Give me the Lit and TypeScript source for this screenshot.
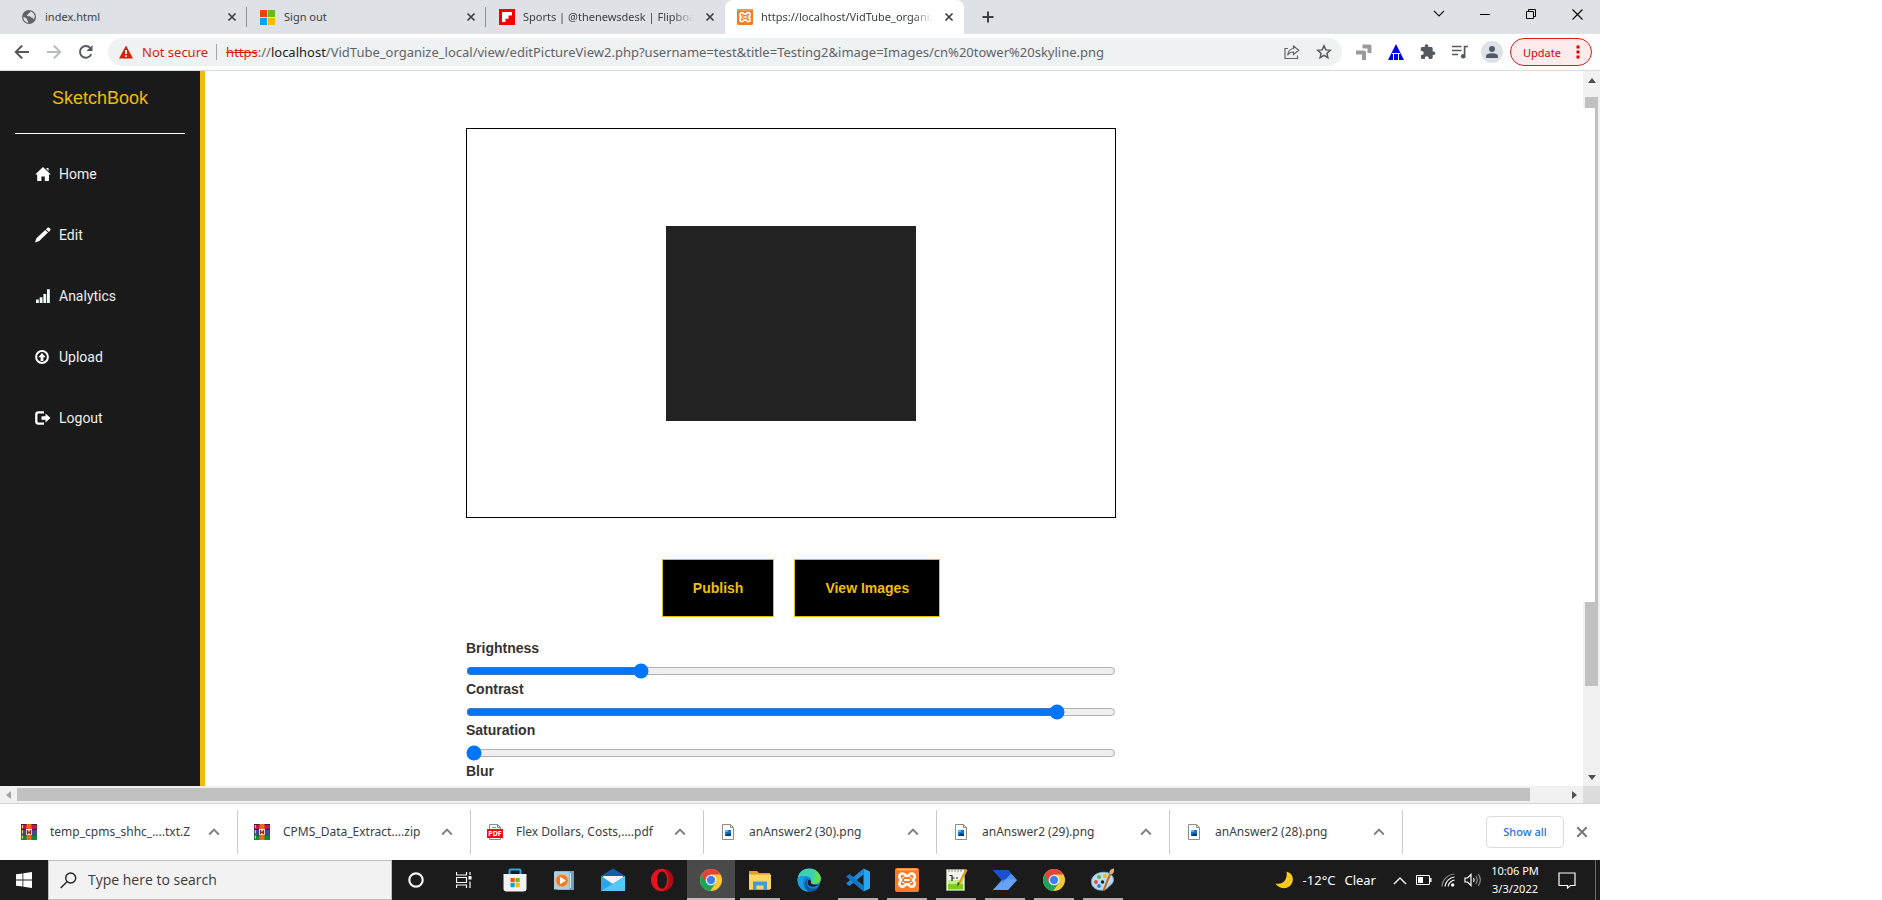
import { LitElement, html, css, svg, TemplateResult } from "lit";
import { customElement, property } from "lit/decorators.js";
import { classMap } from "lit/directives/class-map.js";

const icon = (w: number, h: number, body: TemplateResult, box = `0 0 ${w} ${h}`) =>
  html`<svg width=${w} height=${h} viewBox=${box} fill="none" aria-hidden="true">${body}</svg>`;

/* ---------- browser chrome ---------- */
const closeSmall = icon(10, 10, svg`<path d="M1.5 1.5l7 7M8.5 1.5l-7 7" stroke="#3c4043" stroke-width="1.7"/>`);
const globe = icon(16, 16, svg`<circle cx="8" cy="8" r="7" fill="#5f6368"/>
  <path d="M2.2 8.2c1.6 0 2.6.5 3.4 1.2.7.7.1 1.500.9 2 .8.4.6 1.500.6 2.300-2.600-.4-4.800-2.600-4.900-5.500zM9.200 2.300c.1 1-.2 1.500-1.200 1.900-.9.300-.6 1.400-1.600 1.600-.8.2-.4 1.500.5 1.500 1.400 0 2.400-.2 3 .8.4.8 1.500.6 2.100 1.200.5.500.4 1.100.1 1.700 1-1 1.700-2.300 1.600-3.800-.3-2.500-2-4.400-4.500-4.900z" fill="#dee1e6"/>`);
const microsoft = icon(16, 16, svg`<path d="M0 1h7v7H0z" fill="#ff4000"/><path d="M8 1h7v7H8z" fill="#6cbb1e"/><path d="M0 9h7v7H0z" fill="#00a4ef"/><path d="M8 9h7v7H8z" fill="#ffb900"/>`);
const flipboard = icon(16, 16, svg`<path d="M0 0h16v16H0z" fill="#f50000"/><path d="M3 3h10v3.500H9.500v3.200H6.500V13H3z" fill="#fff"/>`);
const xamppMark = svg`<rect width="24" height="24" rx="2" fill="#fb7a24"/><path d="M2 1.500h20" stroke="#ffb684" stroke-width="1.500"/>
  <path d="M7.500 5.500c1.800 0 2.200 1.200 3 2.300h3c.8-1.100 1.200-2.300 3-2.300 2 0 3.200 1.400 3.200 3.200 0 1.700-1 2.300-1.800 3.300.8 1 1.800 1.800 1.800 3.600 0 1.900-1.200 3.200-3.200 3.200-1.800 0-2.200-1.300-3-2.400h-3c-.8 1.100-1.200 2.400-3 2.400-2 0-3.200-1.300-3.200-3.200 0-1.800 1-2.600 1.800-3.600-.8-1-1.800-1.600-1.800-3.300 0-1.800 1.200-3.200 3.200-3.200z" stroke="#fff" stroke-width="2.600" fill="#fb7a24"/>
  <path d="M9.200 12h5.600M8 9.300v1M16 9.300v1M8 14v1M16 14v1" stroke="#fff" stroke-width="2.200"/>`;
const xamppSmall = icon(16, 16, xamppMark, "0 0 24 24");
const plus = icon(14, 14, svg`<path d="M7 1.500v11M1.500 7h11" stroke="#3c4043" stroke-width="2"/>`);

const back = icon(16, 16, svg`<path d="M15 8H2M8.200 1.500L1.700 8l6.500 6.500" stroke="#55595d" stroke-width="1.900"/>`);
const forward = icon(16, 16, svg`<path d="M1 8h13M7.800 1.500L14.300 8l-6.500 6.500" stroke="#b9bbbe" stroke-width="1.900"/>`);
const reload = icon(16, 16, svg`<path d="M13.300 10.200A5.900 5.900 0 1 1 12.200 3.800" stroke="#55595d" stroke-width="1.900"/><path d="M14.500 1v6H8.500z" fill="#55595d"/>`);
const warning = icon(14, 14, svg`<path d="M7 .5L14 13.500H0z" fill="#d81e06"/><path d="M6.100 5h1.800v4H6.100zM6.100 10.200h1.800V12H6.100z" fill="#fff"/>`);
const share = icon(16, 16, svg`<path d="M4 4.500H1v10h12.500v-3" stroke="#5f6368" stroke-width="1.200"/><path d="M9.500 2l5.300 4.200-5.300 4.200V8C6.800 8 5 9 3.600 11.200 4 7.500 6 4.900 9.500 4.500z" stroke="#5f6368" stroke-width="1.200"/>`);
const star = icon(16, 16, svg`<path d="M8 1.800l1.800 4.100 4.500.4-3.400 3 1 4.400L8 11.300l-3.900 2.400 1-4.400-3.400-3 4.500-.4z" stroke="#55595d" stroke-width="1.500"/>`);
const arrowsExt = icon(16, 16, svg`<path d="M6.500 2.500H13.500V9" stroke="#9b9b9b" stroke-width="4" stroke-linejoin="round"/><path d="M0 8.500h8V16" stroke="#9b9b9b" stroke-width="4" stroke-linejoin="round"/>`);
const triangleExt = icon(16, 16, svg`<path d="M8 0l8 16H0z" fill="#0000fa"/><path d="M4 9.500h8M5.500 10v6M10.500 10v6" stroke="#fff" stroke-width="1"/>`);
const puzzle = icon(16, 16, svg`<path d="M13.600 7.500h-.9V4.400c0-.8-.6-1.400-1.400-1.400H8.300v-1a1.800 1.800 0 0 0-3.600 0v1H2.200C1.400 3 .9 3.600.9 4.400v2.700h.9a1.900 1.900 0 0 1 0 3.800H.9v2.700c0 .8.5 1.400 1.300 1.400h2.700v-.9a1.900 1.900 0 0 1 3.800 0v.9h2.600c.8 0 1.400-.6 1.400-1.400v-2.500h.9a1.800 1.800 0 0 0 0-3.600z" fill="#55595d"/>`);
const music = icon(16, 16, svg`<path d="M0 2.500h9.500M0 6.500h9.500M0 10.500h6" stroke="#55595d" stroke-width="1.700"/><path d="M16 2.500h-3.400v9.500" stroke="#55595d" stroke-width="1.700"/><circle cx="11.200" cy="12.200" r="2.300" fill="#55595d"/>`);
const person = icon(14, 14, svg`<circle cx="7" cy="4" r="3" fill="#505a6e"/><path d="M1 13v-1.800C1 9 4.500 8.300 7 8.300s6 .7 6 2.900V13z" fill="#505a6e"/>`);
const dots = icon(4, 14, svg`<path d="M.5.500h3v3h-3zM.500 5.500h3v3h-3zM.500 10.500h3v3h-3z" fill="#d80000"/>`);

const winChevron = icon(12, 8, svg`<path d="M1 1l5 5 5-5" stroke="#111" stroke-width="1.100"/>`);
const winMin = icon(10, 10, svg`<path d="M0 5.500h10" stroke="#000"/>`);
const winRestore = icon(10, 10, svg`<path d="M.5 2.500h7v7h-7zM2.500 2.500v-2h7v7h-2" stroke="#000"/>`);
const winClose = icon(11, 11, svg`<path d="M.5.500l10 10M10.500.500l-10 10" stroke="#000" stroke-width="1.100"/>`);

/* ---------- sidebar ---------- */
const navHome = icon(16, 16, svg`<path d="M8 1l7.800 7.400H14V15H9.800v-4.500H6.400V15H2.200V8.400H.2zM11.500 2h2v3l-2-2z" fill="#fff"/>`);
const navEdit = icon(16, 16, svg`<path d="M0 15.500L1.400 11.300 10.200 3 13 5.600 4.200 14zM11 2.200L12.600.8c.6-.5 1.100-.4 1.600 0l1.100 1.100c.5.500.5 1 0 1.500L13.800 4.900z" fill="#fff"/>`);
const navChart = icon(16, 16, svg`<path d="M1 11.500h2.800V15H1zM4.700 9.300h2.800V15H4.700zM8.400 6h2.800v9H8.400zM12 1.200h2.800V15H12z" fill="#f2ffff"/>`);
const navUpload = icon(16, 16, svg`<circle cx="7" cy="8" r="5.900" stroke="#fff" stroke-width="2"/><path d="M7 4l3.700 4.300H8.400V12H5.600V8.300H3.300z" fill="#fff"/>`);
const navLogout = icon(16, 16, svg`<path d="M9 2.400H3.500C2 2.400 1.300 3.200 1.300 4.500v7c0 1.300.7 2.100 2.200 2.100H9" stroke="#fff" stroke-width="2.300"/><path d="M6.500 6.200h4V3.500l5 4.500-5 4.500V9.800h-4z" fill="#fff"/>`);

/* ---------- downloads ---------- */
const archive = icon(16, 16, svg`<path d="M0 0h16v5H0z" fill="#c4144a"/><path d="M0 5h16v5.500H0z" fill="#4343a0"/><path d="M0 10.500h16V16H0z" fill="#0b8a3a"/>
  <path d="M0 .5h16M0 5.500h16M0 10.800h16" stroke="#2a1a2a" stroke-width=".8"/><path d="M1.500 1v3M1.500 6v3.500M1.500 11.500v3" stroke="#f5d040" stroke-width="1"/>
  <path d="M5.500 0h5v16h-5z" fill="#f06a1a"/><path d="M5 5h6v6H5z" fill="#f4e6e0"/><path d="M6.500 6v3.500L8 8l1.500 1.500V6" stroke="#a02010" stroke-width="1.300"/>`);
const pdf = html`<span class="pdf">${icon(16, 16, svg`<path d="M2.500.5h8l3 3v12h-11z" fill="#fff" stroke="#8a8a8a"/><path d="M10.500.500v3h3M5 3.500h4" stroke="#8a8a8a"/><path d="M0 5h16v9H0z" fill="#ee0d0d"/>`)}<b>PDF</b></span>`;
const picture = icon(16, 16, svg`<path d="M2.500.5h8l3 3v12h-11z" fill="#fff" stroke="#8c8c8c"/><path d="M10.500.500v3h3" stroke="#8c8c8c"/><path d="M5 6h6v6H5z" fill="#0a78d6"/><path d="M5 12l3-3 1.500 1 1.500-1v3z" fill="#083a66"/><path d="M5 6h3v2H5z" fill="#4ab8f5"/>`);
const caretUp = icon(12, 8, svg`<path d="M1.200 6.500L6 1.700l4.800 4.800" stroke="#7b7f83" stroke-width="1.900"/>`);
const closeBar = icon(12, 12, svg`<path d="M1.300 1.300l9.400 9.400M10.700 1.300l-9.400 9.400" stroke="#75797d" stroke-width="2"/>`);

/* ---------- taskbar ---------- */
const windowsLogo = icon(16, 16, svg`<path d="M0 2.300L6.500 1.400V7.500H0zM7.300 1.300L16 0v7.500H7.300zM0 8.400h6.500v6.200L0 13.700zM7.300 8.400H16V16l-8.700-1.300z" fill="#fff"/>`);
const magnifier = icon(17, 17, svg`<circle cx="10.700" cy="6" r="5" stroke="#222" stroke-width="1.400"/><path d="M7 9.700L.7 16" stroke="#222" stroke-width="1.400"/>`);
const cortana = icon(16, 16, svg`<circle cx="8" cy="8" r="6.700" stroke="#f4f4f4" stroke-width="2.200"/>`);
const taskView = icon(16, 16, svg`<path d="M.5 0v3h10V0M.500 16v-3h10V16M.500 5.500h10v5H.500zM14 0v3M14 9.500V16" stroke="#fff" stroke-width="1.200"/><path d="M12.500 4h3v3.500h-3z" fill="#fff"/>`);

const chromeMark = svg`<circle cx="12" cy="12" r="11" fill="#fcc934"/>
  <path d="M12 12L2.500 6.500A11 11 0 0 0 11.200 23L16.800 14.700z" fill="#1ea35a"/><path d="M2.500 6.500A11 11 0 0 1 21.500 6.500H12L7.200 14.800z" fill="#e2443a"/>
  <circle cx="12" cy="12" r="5.300" fill="#fff"/><circle cx="12" cy="12" r="4.200" fill="#3f7ff0"/>`;
const apps: { name: string; art: TemplateResult; state: string }[] = [
  { name: "Microsoft Store", state: "", art: svg`<path d="M6.500 6V2.500c0-.6.400-1 1-1h9c.6 0 1 .4 1 1V6" stroke="#29a8ea" stroke-width="2"/><path d="M.5 6h23v14.500c0 2-1 3-3 3h-17c-2 0-3-1-3-3z" fill="#f3f3f3"/><path d="M7.500 10h4.200v4.200H7.500z" fill="#f25022"/><path d="M12.500 10h4.200v4.200h-4.200z" fill="#7fba00"/><path d="M7.500 15h4.200v4.200H7.500z" fill="#00a4ef"/><path d="M12.500 15h4.200v4.200h-4.200z" fill="#ffb900"/>` },
  { name: "Media Player", state: "", art: svg`<path d="M3 3h19v19H6l-3-2z" fill="#6aa0bd"/><path d="M2 3.500h15.500v18H2z" fill="#a9d0e4"/><path d="M18.500 5v15" stroke="#d5ecf5"/><circle cx="10" cy="12.500" r="6.300" fill="#f47b20" stroke="#fbb27a"/><path d="M8 8.800l6 3.700-6 3.700z" fill="#fff"/>` },
  { name: "Mail", state: "", art: svg`<path d="M0 8L12 .5 24 8v4H0z" fill="#0f5ea8"/><path d="M2 8h20v8H2z" fill="#f2f2f2"/><path d="M0 8l12 8 12-8v15H0z" fill="#2ea4e8"/><path d="M0 23l14-8.500L24 8v15z" fill="#50c8f8"/>` },
  { name: "Opera", state: "", art: svg`<ellipse cx="12" cy="12" rx="11" ry="11.200" fill="#e8121e"/><path d="M12 .8c7 0 11 5 11 11.200s-4 11.200-11 11.200c3.500-.5 6.500-5 6.500-11.200S15.500 1.300 12 .8z" fill="#b00c18"/><ellipse cx="12" cy="12" rx="5" ry="8.700" fill="#1b1b1b"/>` },
  { name: "Chrome", state: "active", art: chromeMark },
  { name: "File Explorer", state: "open", art: svg`<path d="M1 3h8l2 2h11v17H1z" fill="#e0a11c"/><path d="M1 6.500h22V21H1z" fill="#fcd566"/><path d="M5 22v-8.500h14V22h-3.500v-4.500h-7V22z" fill="#3f9ae0"/>` },
  { name: "Edge", state: "", art: svg`<circle cx="12" cy="12" r="11.500" fill="#1186d4"/><path d="M1 9.500C2 3.500 7 .5 12.500.500 19 .500 23.800 5.500 23.800 10.500c0 3.600-2.800 5.600-6 5.600-2.500 0-4.200-.8-3.800-2 .9-3-1-5.600-5-5.800-3.500-.2-6.600.3-8 1.200z" fill="#3fd0b4"/><path d="M17 2c5 2.500 7 6 6.800 9-.3 3.300-2.800 5.100-6 5.100-2 0-3.500-.5-3.800-1.200 3.500-3 5-8 3-12.900z" fill="#62dc5a"/><path d="M9 8.300C5 10 5 20 11 23.500 5 23.300 .5 18.500.500 12c0-3.500 4-4.500 8.500-3.700z" fill="#1b9de2"/><path d="M11.500 11c-3.500 2-2 9.500 5 9.500 2.200 0 4-.6 5.500-1.500-2.500 3.500-6 4.700-9.500 4.500C6 22 6 11.500 11.500 11z" fill="#0c59a4"/><path d="M12 11.500c1.500.5 2.400 1.600 1.900 3-.2 1 1.600 2.800 7.600 2-3 3-9 3-10.500-.5-.7-1.800-.2-3.700 1-4.500z" fill="#1b1b1b"/>` },
  { name: "Visual Studio Code", state: "open", art: svg`<path d="M17.500.5L24 3.500v17l-6.500 3z" fill="#2aa4ee"/><path d="M17.500.500v6L3.500 18 0 15.500z" fill="#1f8ad8"/><path d="M17.500 23.500v-6L3.500 6 0 8.500z" fill="#1577c4"/>` },
  { name: "XAMPP", state: "open", art: xamppMark },
  { name: "Notepad++", state: "open", art: svg`<path d="M2.500 1.500h18v21h-18z" fill="#f2f4ee" stroke="#9ba38f"/><path d="M4 15h15v6.500H4z" fill="#7ccf1c"/><path d="M4 12h15v4H4z" fill="#c5ec8e"/><path d="M5 1v3M8 1v3M11 1v3M14 1v3M17 1v3" stroke="#8a8a8a"/><path d="M5.500 7.500H8V13M8 10h2.500M12 10h2" stroke="#222" stroke-width="1.200"/><path d="M22.500 1.500L14.500 17" stroke="#e0a020" stroke-width="2.500"/><path d="M15.600 15l-2.600 4 .7-4.700z" fill="#333"/>` },
  { name: "Power Automate", state: "open", art: svg`<path d="M0 2h15l9 10-9 10H0l9-10z" fill="#4f93f7"/><path d="M0 2h15l3 3.400L9 15.500 9 12z" fill="#1c4fd0"/><path d="M0 22l9-10 5.500-1L24 12l-9 10z" fill="#74aefb" opacity=".6"/>` },
  { name: "Chrome", state: "open", art: chromeMark },
  { name: "Paint", state: "open", art: svg`<path d="M10 4.500C4 5.500 0 9.500.500 14.500 1 20 7 23 12.500 22c3.500-.8 4-2.500 6-4 3-2.300 5-5 3.300-9C20 5.300 15.500 3.500 10 4.500z" fill="#b9dcee" stroke="#7fb2cc"/><circle cx="5" cy="14" r="1.900" fill="#e04a3a"/><circle cx="8" cy="9" r="2" fill="#59b83a"/><circle cx="14" cy="8" r="2" fill="#f0b82a"/><circle cx="8" cy="18" r="1.900" fill="#3a74d8"/><circle cx="11.500" cy="14" r="1.700" fill="#1b1b1b"/><path d="M20 4l-7.500 18.500" stroke="#c06a28" stroke-width="2"/><path d="M18.500 5.500c-.5-3 1.500-4.500 4.500-5 .5 3-.5 5.500-3 6z" fill="#e3b27c"/>` },
];

const moon = icon(20, 20, svg`<path d="M12.500 1.500c5 1.500 7 5.500 6.200 9.500-1 5-5.700 7.900-10.700 7-3-.6-5.400-2.400-6.500-4.500 4 1 8-.3 9.800-3.800 1.500-2.800 1.800-5.400 1.200-8.200z" fill="#fdc81c"/>`);
const trayUp = icon(14, 9, svg`<path d="M1 8l6-6 6 6" stroke="#fff" stroke-width="1.300"/>`);
const battery = icon(16, 10, svg`<path d="M.5.500h13v9H.500z" stroke="#fff"/><path d="M2 2h5v6H2zM14 3h1.500v4H14z" fill="#fff"/>`);
const wifi = icon(14, 14, svg`<path d="M1 13.500C1.500 6.500 6.500 1.500 13.500 1" stroke="#8e8e8e" stroke-width="1.200"/><path d="M4 13.500c.5-5 4.500-9 9.500-9.500M7.200 13.500c.3-3.200 3-6 6.300-6.300" stroke="#eee" stroke-width="1.200"/><circle cx="11.700" cy="12" r="1.700" fill="#fff"/>`);
const speaker = icon(18, 14, svg`<path d="M1 5h2.500L7 1.500v11L3.500 9H1z" stroke="#fff" stroke-width="1.200"/><path d="M9.500 5c.8 1.200.8 2.800 0 4" stroke="#fff" stroke-width="1.200"/><path d="M11.800 3c1.800 2.500 1.800 5.500 0 8M14.200 1.200c2.600 3.500 2.600 8 0 11.600" stroke="#8e8e8e" stroke-width="1.200"/>`);
const notification = icon(18, 17, svg`<path d="M1 1h16v12.500h-4.500L9.500 16v-2.500H1z" stroke="#fff" stroke-width="1.200"/>`);

@customElement("browser-header")
export class BrowserHeader extends LitElement {
  static styles = css`
    :host { display: block; font-family: "Noto Sans", "Open Sans", sans-serif; color: #3c4043; }
    svg { display: block; flex: none; }
    button { border: 0; background: none; padding: 0; font: inherit; display: grid; place-items: center; flex: none; }
    .strip { display: flex; align-items: flex-start; height: 34px; background: #dee1e6; padding-left: 8px; }
    .tab { display: flex; align-items: center; box-sizing: border-box; width: 239px; height: 34px; padding: 0 7px 6px 13px; gap: 8px; font-size: 11px; line-height: 16px; background: linear-gradient(#8b8e92, #8b8e92) right 7px / 1px 20px no-repeat; }
    .tab.last { background: none; }
    .tab.current { height: 34px; padding-left: 12px; background: #fff; border-radius: 8px 8px 0 0; }
    .label { flex: 1; min-width: 0; overflow: hidden; white-space: nowrap; }
    .fade { -webkit-mask-image: linear-gradient(90deg, #000 88%, transparent); mask-image: linear-gradient(90deg, #000 88%, transparent); }
    .close { width: 16px; height: 16px; }
    .tab { padding-top: 0; padding-bottom: 0; }
    .new { width: 28px; height: 34px; margin-left: 10px; }
    .controls { margin-left: auto; display: flex; }
    .controls button { width: 46px; height: 28px; }
    .bar { display: flex; align-items: center; height: 36px; background: #fff; border-bottom: 1px solid #dadce0; padding: 0 8px 0 6px; }
    .nav { width: 32px; height: 28px; }
    .omnibox { flex: 1; min-width: 0; display: flex; align-items: center; height: 28px; box-sizing: border-box; background: #eff2f3; border-radius: 14px; margin: 0 6px 0 6px; padding: 0 2px 0 11px; font-size: 13px; }
    .insecure { display: flex; align-items: center; gap: 9px; color: #d81e06; padding-right: 8px; margin-right: 9px; border-right: 1px solid #a5a8ab; height: 16px; white-space: nowrap; }
    .url { flex: 1; min-width: 0; overflow: hidden; white-space: nowrap; color: #5f6368; }
    .url s { color: #d81e06; }
    .url b { font-weight: 400; color: #202124; }
    .avatar { width: 22px; height: 22px; border-radius: 50%; background: #dee1e6; margin: 0 7px 0 5px; }
    .update { display: flex; align-items: center; justify-content: space-between; box-sizing: border-box; width: 82px; height: 28px; padding: 0 11px 0 12px; border: 1px solid #dc1a1a; border-radius: 14px; background: #feecec; color: #d80000; font-size: 11px; }
  `;

  render() {
    const tabs = [
      { cls: "", art: globe, text: "index.html" },
      { cls: "", art: microsoft, text: "Sign out" },
      { cls: "last", art: flipboard, text: "Sports | @thenewsdesk | Flipboard" },
      { cls: "current", art: xamppSmall, text: "https://localhost/VidTube_organize_local" },
    ];
    return html`
      <div class="strip">
        ${tabs.map((t) => html`<div class=${classMap({ tab: true, last: t.cls === "last", current: t.cls === "current" })}>
          ${t.art}<span class=${classMap({ label: true, fade: t.cls !== "" })}>${t.text}</span>
          <button class="close" aria-label="Close tab">${closeSmall}</button>
        </div>`)}
        <button class="new" aria-label="New tab">${plus}</button>
        <div class="controls">
          <button aria-label="Search tabs">${winChevron}</button>
          <button aria-label="Minimize">${winMin}</button>
          <button aria-label="Restore">${winRestore}</button>
          <button aria-label="Close">${winClose}</button>
        </div>
      </div>
      <div class="bar">
        <button class="nav" aria-label="Back">${back}</button>
        <button class="nav" aria-label="Forward">${forward}</button>
        <button class="nav" aria-label="Reload">${reload}</button>
        <div class="omnibox">
          <span class="insecure">${warning}Not secure</span>
          <span class="url"><s>https</s>://<b>localhost</b>/VidTube_organize_local/view/editPictureView2.php?username=test&amp;title=Testing2&amp;image=Images/cn%20tower%20skyline.png</span>
          <button class="nav" aria-label="Share">${share}</button>
          <button class="nav" aria-label="Bookmark">${star}</button>
        </div>
        <button class="nav" aria-label="Send">${arrowsExt}</button>
        <button class="nav" aria-label="Ads">${triangleExt}</button>
        <button class="nav" aria-label="Extensions">${puzzle}</button>
        <button class="nav" aria-label="Media">${music}</button>
        <button class="avatar" aria-label="Profile">${person}</button>
        <button class="update">Update ${dots}</button>
      </div>`;
  }
}

@customElement("sketch-page")
export class SketchPage extends LitElement {
  static styles = css`
    :host { display: flex; flex: 1; min-width: 0; min-height: 0; overflow: hidden; background: #fff; font: 14px/20px "Liberation Sans", Arial, sans-serif; color: #333; }
    svg { display: block; flex: none; }
    .side { flex: none; width: 200px; background: #1a1a1a; border-right: 5px solid #f0be0a; }
    .brand { margin: 0 15px; height: 63px; box-sizing: border-box; padding-top: 17px; border-bottom: 1px solid #fff; text-align: center; font-size: 18px; line-height: 20px; font-weight: 400; color: #eebc0c; }
    .menu { list-style: none; margin: 0; padding: 9px 0 0; font: 14px/20px Roboto, sans-serif; }
    .menu a { display: flex; align-items: center; gap: 8px; height: 61px; padding-left: 35px; color: #eee; text-decoration: none; }
    .stage { flex: 1; min-width: 0; display: flex; flex-direction: column; align-items: center; padding: 57px 206px 0 0; }
    .canvas { flex: none; box-sizing: border-box; width: 650px; height: 390px; border: 1px solid #000; display: grid; place-items: center; }
    .image { width: 250px; height: 195px; background: #222; }
    .actions { flex: none; display: flex; gap: 20px; padding: 41px 0 0 20px; }
    .actions button { height: 58px; padding: 0 30px; border: 1px solid #e9b90c; background: #000; color: #f0be0a; font: bold 14px/20px "Liberation Sans", Arial, sans-serif; }
    .filters { flex: none; width: 650px; padding-top: 21px; }
    .filters label { display: block; font-weight: 700; margin-bottom: 5px; }
    .filters input { display: block; width: 100%; height: 16px; margin: 0; accent-color: #0075ff; }
  `;

  render() {
    const menu: [TemplateResult, string][] = [[navHome, "Home"], [navEdit, "Edit"], [navChart, "Analytics"], [navUpload, "Upload"], [navLogout, "Logout"]];
    const filters: [string, number][] = [["Brightness", 263], ["Contrast", 920], ["Saturation", 0], ["Blur", 0]];
    return html`
      <nav class="side">
        <h1 class="brand">SketchBook</h1>
        <ul class="menu">${menu.map(([art, text]) => html`<li><a href="#">${art}${text}</a></li>`)}</ul>
      </nav>
      <main class="stage">
        <div class="canvas"><div class="image"></div></div>
        <div class="actions"><button>Publish</button><button>View Images</button></div>
        <div class="filters">${filters.map(([name, value]) => html`
          <label for=${name}>${name}</label>
          <input id=${name} type="range" min="0" max="1000" .value=${String(value)} />`)}
        </div>
      </main>`;
  }
}

@customElement("scroll-rail")
export class ScrollRail extends LitElement {
  @property({ type: Boolean, reflect: true }) horizontal = false;

  static styles = css`
    :host { display: flex; flex-direction: column; flex: none; width: 17px; background: #fff; }
    :host([horizontal]) { flex-direction: row; width: auto; height: 17px; background: #f1f1f1; }
    svg { display: block; }
    .end { flex: none; height: 17px; display: grid; place-items: center; background: #f1f1f1; }
    .top { height: 19px; padding-top: 7px; place-items: start center; }
    .stub { flex: none; height: 11px; border: solid #f1f1f1; border-width: 0 2px; background: #c1c1c1; }
    .edge { flex: 494; border-right: 2px solid #f1f1f1; background: linear-gradient(#c1c1c1, #c1c1c1) right / 3px 100% no-repeat; }
    .thumb { flex: 84; border: solid #f1f1f1; border-width: 0 2px; background: #c1c1c1; }
    .rest { flex: 83; background: #f1f1f1; }
    .cap { flex: none; width: 17px; display: grid; place-items: center; }
    .bar { flex: 1; margin: 2px 0; background: #c1c1c1; }
    .gap { flex: none; width: 36px; }
    .corner { flex: none; width: 17px; background: #dcdcdc; }
  `;

  render() {
    return this.horizontal
      ? html`<div class="cap">${icon(5, 8, svg`<path d="M5 0v8L0 4z" fill="#a3a3a3"/>`)}</div>
          <div class="bar"></div><div class="gap"></div>
          <div class="cap">${icon(5, 8, svg`<path d="M0 0v8l5-4z" fill="#505050"/>`)}</div><div class="corner"></div>`
      : html`<div class="end top">${icon(8, 5, svg`<path d="M0 5h8L4 0z" fill="#505050"/>`)}</div>
          <div class="stub"></div><div class="edge"></div><div class="thumb"></div><div class="rest"></div>
          <div class="end">${icon(8, 5, svg`<path d="M0 0h8L4 5z" fill="#505050"/>`)}</div>`;
  }
}

@customElement("download-shelf")
export class DownloadShelf extends LitElement {
  static styles = css`
    :host { display: flex; align-items: center; flex: none; height: 56px; background: #fff; border-top: 1px solid #d5d5d5; padding-left: 5px; font: 12px/16px "Noto Sans", "Open Sans", sans-serif; color: #3c4043; }
    svg { display: block; flex: none; }
    button { border: 0; background: none; padding: 0; font: inherit; display: grid; place-items: center; flex: none; }
    .item { display: flex; align-items: center; gap: 13px; box-sizing: border-box; width: 233px; height: 44px; padding: 0 17px 0 16px; border-right: 1px solid #c6c8ca; }
    .name { flex: 1; min-width: 0; white-space: nowrap; }
    .pdf { display: grid; }
    .pdf > * { grid-area: 1 / 1; }
    .pdf b { font-size: 7px; line-height: 9px; color: #fff; text-align: center; margin-top: 5px; }
    .all { width: 78px; height: 32px; margin-left: auto; border: 1px solid #dadce0; border-radius: 4px; color: #1a73e8; font-size: 11px; font-weight: 500; }
    .shut { width: 36px; height: 32px; }
  `;

  render() {
    const files: [TemplateResult, string][] = [
      [archive, "temp_cpms_shhc_....txt.Z"],
      [archive, "CPMS_Data_Extract....zip"],
      [pdf, "Flex Dollars, Costs,....pdf"],
      [picture, "anAnswer2 (30).png"],
      [picture, "anAnswer2 (29).png"],
      [picture, "anAnswer2 (28).png"],
    ];
    return html`${files.map(([art, name]) => html`<div class="item">${art}<span class="name">${name}</span><button aria-label="Options">${caretUp}</button></div>`)}
      <button class="all">Show all</button><button class="shut" aria-label="Close">${closeBar}</button>`;
  }
}

@customElement("task-bar")
export class TaskBar extends LitElement {
  static styles = css`
    :host { display: flex; align-items: stretch; flex: none; height: 40px; background: #1b1b1b; color: #fff; font: 13px/18px "Noto Sans", "Open Sans", sans-serif; }
    svg { display: block; flex: none; }
    button { border: 0; background: none; padding: 0; color: inherit; font: inherit; display: grid; place-items: center; flex: none; width: 48px; }
    .search { display: flex; align-items: center; gap: 11px; box-sizing: border-box; width: 344px; padding-left: 11px; background: #f2f2f2; border: 1px solid #bdbdbd; }
    .search input { flex: 1; min-width: 0; border: 0; padding: 0; background: none; outline: 0; font: 14px/20px "Open Sans", "Noto Sans", sans-serif; }
    .search input::placeholder { color: #3a3a3a; opacity: 1; }
    .apps { display: flex; gap: 1px; margin-left: 3px; }
    .open { background: linear-gradient(#b5adad, #b5adad) bottom / 40px 2px no-repeat; }
    .active { background: linear-gradient(#c4bcbc, #c4bcbc) bottom / 48px 2px no-repeat #4a4a4a; }
    .tray { margin-left: auto; display: flex; align-items: center; }
    .weather { display: flex; align-items: center; gap: 9px; margin-right: 17px; }
    .status { display: flex; align-items: center; gap: 9px; }
    .clock { width: 66px; margin-right: 3px; text-align: center; font-size: 11px; line-height: 18px; }
    .note { height: 40px; width: 32px; }
    .desktop { align-self: stretch; width: 4px; margin-left: 12px; border-left: 1px solid #6a6a6a; }
  `;

  render() {
    return html`
      <button aria-label="Start">${windowsLogo}</button>
      <label class="search">${magnifier}<input type="text" placeholder="Type here to search" aria-label="Search" /></label>
      <button aria-label="Cortana">${cortana}</button>
      <button aria-label="Task view">${taskView}</button>
      <div class="apps">${apps.map((a) => html`<button aria-label=${a.name} class=${classMap({ open: a.state === "open", active: a.state === "active" })}>${icon(24, 24, a.art)}</button>`)}</div>
      <div class="tray">
        <div class="weather">${moon}<span>-12°C</span><span>Clear</span></div>
        <div class="status">${trayUp}${battery}${wifi}${speaker}</div>
        <div class="clock">10:06 PM<br />3/3/2022</div>
        <button class="note" aria-label="Notifications">${notification}</button>
        <div class="desktop"></div>
      </div>`;
  }
}

@customElement("app-root")
export class AppRoot extends LitElement {
  static styles = css`
    :host { display: block; background: #fff; }
    .screen { display: flex; flex-direction: column; height: 100vh; max-width: 1600px; overflow: hidden; }
    .view { display: flex; flex: 1; min-height: 0; }
  `;

  render() {
    return html`<div class="screen">
      <browser-header></browser-header>
      <div class="view"><sketch-page></sketch-page><scroll-rail></scroll-rail></div>
      <scroll-rail horizontal></scroll-rail>
      <download-shelf></download-shelf>
      <task-bar></task-bar>
    </div>`;
  }
}
